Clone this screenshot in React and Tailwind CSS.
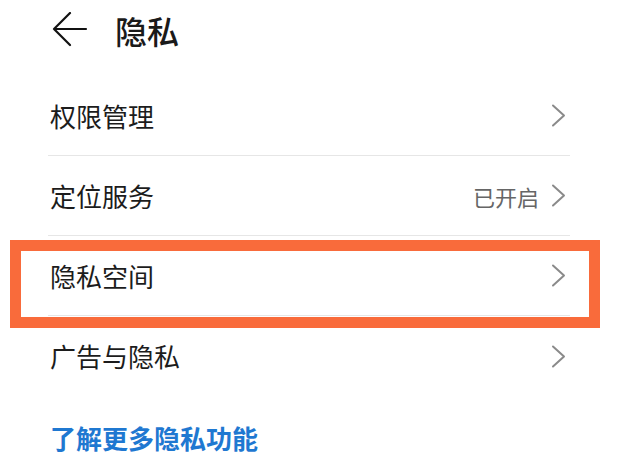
import React from "react";

function Chevron() {
  return (
    <svg width="15" height="23" viewBox="0 0 15 23" fill="none">
      <path d="M2 1.5 L13 11.5 L2 21.5" stroke="#8a8a8a" strokeWidth="2" strokeLinecap="round" strokeLinejoin="round" />
    </svg>
  );
}

function Row({ label, value, last }) {
  return (
    <div className={`flex h-[80px] items-center justify-between pl-[2px] pr-[4px] ${last ? "" : "border-b border-[#e6e6e6]"}`}>
      <span className="text-[26px] leading-none text-[#1c1c1c]">{label}</span>
      <div className="flex items-center gap-[12px]">
        {value && <span className="text-[22px] leading-none text-[#666666]">{value}</span>}
        <Chevron />
      </div>
    </div>
  );
}

export default function App() {
  return (
    <div
      className="relative h-[471px] w-[618px] overflow-hidden bg-white"
      style={{ fontFamily: '"Noto Sans CJK SC", "Noto Sans", sans-serif' }}
    >
      <div className="flex h-[60px] items-center pl-[52px]">
        <svg width="36" height="36" viewBox="0 0 36 36" fill="none">
          <path d="M34 17 H2 M18 1 L2 17 L18 33" stroke="#111" strokeWidth="2.2" strokeLinecap="round" strokeLinejoin="round" />
        </svg>
        <span className="ml-[27px] text-[32px] font-medium leading-none text-[#1a1a1a]">隐私</span>
      </div>
      <div className="ml-[48px] mt-[16px] w-[522px]">
        <Row label="权限管理" />
        <Row label="定位服务" value="已开启" />
        <Row label="隐私空间" />
        <Row label="广告与隐私" last />
      </div>
      <div className="ml-[50px] mt-[29px] text-[26px] font-bold leading-none text-[#1f78d1]">了解更多隐私功能</div>
      <div className="pointer-events-none absolute left-[10px] top-[240px] h-[88px] w-[590px] border-[11px] border-[#f96b3b]" />
    </div>
  );
}
